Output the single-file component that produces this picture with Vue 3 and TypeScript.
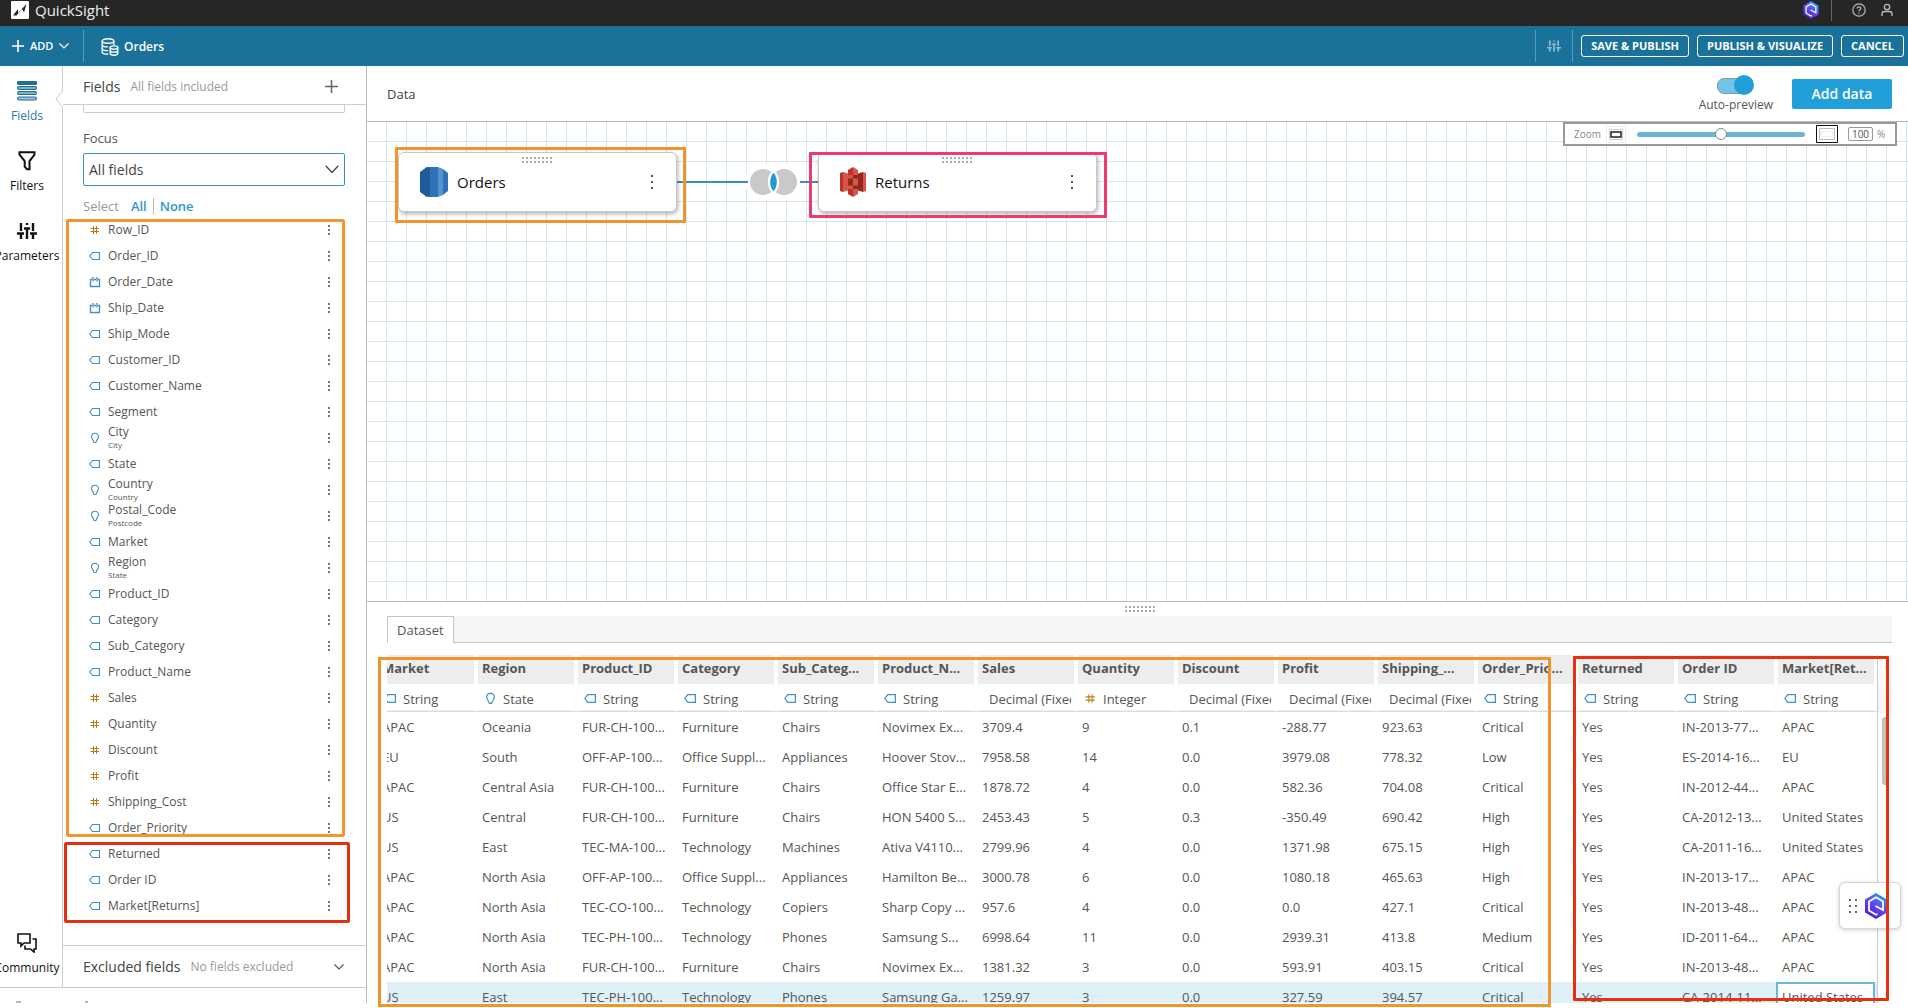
<script setup lang="ts">
import { ref } from 'vue'

type Kind = 'num' | 'tag' | 'date' | 'geo' | 'none'
interface Field { name: string; kind: Kind; geo?: string }
interface Column { name: string; kind: Kind; type: string }

const f = (name: string, kind: Kind, geo?: string): Field => ({ name, kind, geo })

const orderFields: Field[] = [
  f('Row_ID', 'num'), f('Order_ID', 'tag'), f('Order_Date', 'date'), f('Ship_Date', 'date'),
  f('Ship_Mode', 'tag'), f('Customer_ID', 'tag'), f('Customer_Name', 'tag'), f('Segment', 'tag'),
  f('City', 'geo', 'City'), f('State', 'tag'), f('Country', 'geo', 'Country'),
  f('Postal_Code', 'geo', 'Postcode'), f('Market', 'tag'), f('Region', 'geo', 'State'),
  f('Product_ID', 'tag'), f('Category', 'tag'), f('Sub_Category', 'tag'), f('Product_Name', 'tag'),
  f('Sales', 'num'), f('Quantity', 'num'), f('Discount', 'num'), f('Profit', 'num'),
  f('Shipping_Cost', 'num'), f('Order_Priority', 'tag'),
]
const returnFields: Field[] = [f('Returned', 'tag'), f('Order ID', 'tag'), f('Market[Returns]', 'tag')]
const groups = [
  { id: 'orders', fields: orderFields },
  { id: 'returns', fields: returnFields },
]

const c = (name: string, kind: Kind, type: string): Column => ({ name, kind, type })
const columns: Column[] = [
  c('Market', 'tag', 'String'), c('Region', 'geo', 'State'), c('Product_ID', 'tag', 'String'),
  c('Category', 'tag', 'String'), c('Sub_Categ...', 'tag', 'String'), c('Product_N...', 'tag', 'String'),
  c('Sales', 'none', 'Decimal (Fixed)'), c('Quantity', 'num', 'Integer'), c('Discount', 'none', 'Decimal (Fixed)'),
  c('Profit', 'none', 'Decimal (Fixed)'), c('Shipping_...', 'none', 'Decimal (Fixed)'),
  c('Order_Prio...', 'tag', 'String'), c('Returned', 'tag', 'String'), c('Order ID', 'tag', 'String'),
  c('Market[Ret...', 'tag', 'String'),
]

const rows: string[][] = [
  ['APAC', 'Oceania', 'FUR-CH-100...', 'Furniture', 'Chairs', 'Novimex Ex...', '3709.4', '9', '0.1', '-288.77', '923.63', 'Critical', 'Yes', 'IN-2013-77...', 'APAC'],
  ['EU', 'South', 'OFF-AP-100...', 'Office Suppl...', 'Appliances', 'Hoover Stov...', '7958.58', '14', '0.0', '3979.08', '778.32', 'Low', 'Yes', 'ES-2014-16...', 'EU'],
  ['APAC', 'Central Asia', 'FUR-CH-100...', 'Furniture', 'Chairs', 'Office Star E...', '1878.72', '4', '0.0', '582.36', '704.08', 'Critical', 'Yes', 'IN-2012-44...', 'APAC'],
  ['US', 'Central', 'FUR-CH-100...', 'Furniture', 'Chairs', 'HON 5400 S...', '2453.43', '5', '0.3', '-350.49', '690.42', 'High', 'Yes', 'CA-2012-13...', 'United States'],
  ['US', 'East', 'TEC-MA-100...', 'Technology', 'Machines', 'Ativa V4110...', '2799.96', '4', '0.0', '1371.98', '675.15', 'High', 'Yes', 'CA-2011-16...', 'United States'],
  ['APAC', 'North Asia', 'OFF-AP-100...', 'Office Suppl...', 'Appliances', 'Hamilton Be...', '3000.78', '6', '0.0', '1080.18', '465.63', 'High', 'Yes', 'IN-2013-17...', 'APAC'],
  ['APAC', 'North Asia', 'TEC-CO-100...', 'Technology', 'Copiers', 'Sharp Copy ...', '957.6', '4', '0.0', '0.0', '427.1', 'Critical', 'Yes', 'IN-2013-48...', 'APAC'],
  ['APAC', 'North Asia', 'TEC-PH-100...', 'Technology', 'Phones', 'Samsung S...', '6998.64', '11', '0.0', '2939.31', '413.8', 'Medium', 'Yes', 'ID-2011-64...', 'APAC'],
  ['APAC', 'North Asia', 'FUR-CH-100...', 'Furniture', 'Chairs', 'Novimex Ex...', '1381.32', '3', '0.0', '593.91', '403.15', 'Critical', 'Yes', 'IN-2013-48...', 'APAC'],
  ['US', 'East', 'TEC-PH-100...', 'Technology', 'Phones', 'Samsung Ga...', '1259.97', '3', '0.0', '327.59', '394.57', 'Critical', 'Yes', 'CA-2014-11...', 'United States'],
]

const focus = ref('All fields')
const autoPreview = ref(true)
const zoom = ref('100')
const zoomLevel = ref(50)
</script>

<template>
  <div class="app">
    <svg class="defs" aria-hidden="true">
      <defs>
        <linearGradient id="q-grad" x1="0.2" y1="1" x2="0.8" y2="0">
          <stop offset="0" stop-color="#4a1fb8" />
          <stop offset="0.5" stop-color="#5f45f2" />
          <stop offset="1" stop-color="#1fa8f8" />
        </linearGradient>
        <symbol id="i-num" viewBox="0 0 12 12">
          <path d="M4.500 2v8M7.500 2v8M1.500 4.500h8.500M1.500 7.500h8.500" fill="none" stroke="#c07a1a" stroke-width="1" />
        </symbol>
        <symbol id="i-tag" viewBox="0 0 12 12">
          <path d="M3.500 2.500h7v7h-7L.8 6z" fill="none" stroke="#3f8fc2" stroke-width="1.100" />
        </symbol>
        <symbol id="i-date" viewBox="0 0 12 12">
          <path d="M3 3.500H1.500v7h9v-7H9M5 3.500h2M4 1v4.500M8 1v4.500" fill="none" stroke="#3f8fc2" stroke-width="1.300" />
        </symbol>
        <symbol id="i-geo" viewBox="0 0 12 12">
          <path d="M6 1.200c-2.200 0-3.500 1.600-3.500 3.600 0 1.900 1.900 3 2.500 5.700h2c.6-2.700 2.500-3.800 2.500-5.700 0-2-1.300-3.600-3.500-3.600z" fill="none" stroke="#3f8fc2" stroke-width="1.100" />
        </symbol>
        <symbol id="i-dots" viewBox="0 0 4 12">
          <path d="M1 1h2v2H1zM1 5h2v2H1zM1 9h2v2H1z" fill="#777" />
        </symbol>
        <symbol id="i-grip" viewBox="0 0 30 6">
          <path d="M0 1h30M0 5h30" stroke="#aaa" stroke-width="2" stroke-dasharray="2 2" />
        </symbol>
        <symbol id="i-sliders" viewBox="0 0 20 16">
          <path d="M4 0v8M4 11v5M10 0v2M10 6v10M16 0v8M16 11v5M0 10.500h7M7 5.500h6M13 10.500h7" fill="none" stroke="currentColor" stroke-width="2.400" />
        </symbol>
        <symbol id="i-q" viewBox="0 0 22 26">
          <path d="M11 0l11 6.500v13L11 26 0 19.500v-13z" fill="url(#q-grad)" />
          <path d="M12.500 21l-1.500.8-7-4.200V8.500l7-4.300 7 4.300v8.500L10.500 13" fill="none" stroke="#fff" stroke-width="1.800" />
        </symbol>
      </defs>
    </svg>

    <header class="topbar">
      <a class="brand" href="#">
        <svg width="18" height="18" viewBox="0 0 18 18">
          <rect width="18" height="18" rx="1" fill="#fff" />
          <path d="M2 14.500l5-6.500v4l8.500-9-2.500 8.500-2-3.500-5.500 6.500z" fill="#262626" />
        </svg>
        <span>QuickSight</span>
      </a>
      <div class="top-tools">
        <svg width="18" height="18"><use href="#i-q" /></svg>
        <i class="top-rule"></i>
        <svg class="help" width="14" height="14" viewBox="0 0 14 14" fill="none" stroke="#bbb" stroke-width="1.200">
          <circle cx="7" cy="7" r="6.200" />
          <path d="M5.200 5.600c0-2.400 3.800-2.200 3.600 0C8.700 6.800 7 6.800 7 8.300M7 9.600v1.200" />
        </svg>
        <svg width="12" height="14" viewBox="0 0 12 14" fill="none" stroke="#bbb" stroke-width="1.300">
          <circle cx="6" cy="4" r="2.700" />
          <path d="M1 13v-2c0-1.500 1-2.500 2.500-2.500h5c1.500 0 2.500 1 2.500 2.500v2" />
        </svg>
      </div>
    </header>

    <nav class="bluebar">
      <button class="add">
        <svg width="12" height="12" viewBox="0 0 12 12"><path d="M6 0v12M0 6h12" stroke="#fff" stroke-width="1.600" /></svg>
        <span>ADD</span>
        <svg width="10" height="6" viewBox="0 0 10 6"><path d="M.5.500L5 5 9.500.5" fill="none" stroke="#fff" stroke-width="1.200" /></svg>
      </button>
      <div class="doc">
        <svg width="18" height="18" viewBox="0 0 18 18" fill="none" stroke="#fff" stroke-width="1.400">
          <ellipse cx="7" cy="3" rx="5.800" ry="2.200" />
          <path d="M1.200 3v11c0 1.200 2.500 2.200 6 2.200M12.800 3v4M1.200 6.700c0 1.200 2.600 2.200 5.800 2.200M1.200 10.400c0 1.200 2.600 2.200 6 2.200" />
          <ellipse cx="13" cy="9.500" rx="3.800" ry="1.600" />
          <path d="M9.200 9.500v6c0 1 1.700 1.700 3.800 1.700s3.800-.7 3.800-1.700v-6M9.200 12.500c0 1 1.700 1.600 3.800 1.600s3.800-.6 3.800-1.600" />
        </svg>
        <span>Orders</span>
      </div>
      <div class="actions">
        <button class="tune" aria-label="Settings"><svg width="14" height="12"><use href="#i-sliders" /></svg></button>
        <button class="outline">SAVE &amp; PUBLISH</button>
        <button class="outline">PUBLISH &amp; VISUALIZE</button>
        <button class="outline">CANCEL</button>
      </div>
    </nav>

    <div class="body">
      <div class="left">
        <div class="left-main">
          <aside class="rail">
            <button class="rail-item active">
              <svg width="20" height="20" viewBox="0 0 20 20">
                <rect width="20" height="4" rx="1" fill="#216f97" />
                <rect x=".6" y="5.600" width="18.800" height="2.800" rx="1.400" fill="#9fc6da" stroke="#216f97" stroke-width="1.200" />
                <rect x=".6" y="10.600" width="18.800" height="2.800" rx="1.400" fill="#9fc6da" stroke="#216f97" stroke-width="1.200" />
                <rect x=".6" y="16" width="18.800" height="3" rx="1.400" fill="#9fc6da" stroke="#216f97" stroke-width="1.200" />
              </svg>
              <span>Fields</span>
            </button>
            <button class="rail-item">
              <svg width="20" height="20" viewBox="0 0 20 20"><path d="M2.500 1.200h15v2.500l-5 6.500v8H10l-2.300-2.500v-5.500l-5.200-6.500z" fill="none" stroke="#111" stroke-width="2" /></svg>
              <span>Filters</span>
            </button>
            <button class="rail-item">
              <svg width="20" height="20" viewBox="0 -2 20 20"><use href="#i-sliders" width="20" height="16" /></svg>
              <span>Parameters</span>
            </button>
            <button class="rail-item last">
              <svg width="20" height="20" viewBox="0 0 20 20" fill="none" stroke="#111" stroke-width="1.600">
                <path d="M1 1h12v9H7l-3 3v-3H1z" />
                <path d="M15.500 6H19v10h-2v3l-3.500-3H8v-3.500" />
              </svg>
              <span>Community</span>
            </button>
            <svg class="notch" width="8" height="18" viewBox="0 0 8 18"><path d="M8 0L1 9l7 9" fill="#fff" stroke="#ccc" /></svg>
          </aside>

          <section class="fields">
            <div class="fields-head">
              <h2>Fields</h2>
              <span class="hint">All fields included</span>
              <button class="icon-btn" aria-label="Add field">
                <svg width="13" height="13" viewBox="0 0 13 13"><path d="M6.500 0v13M0 6.500h13" stroke="#666" stroke-width="1.500" /></svg>
              </button>
            </div>
            <div class="fields-top">
              <div class="search-edge"></div>
              <label class="focus-label" for="focus">Focus</label>
              <div class="select-wrap">
                <select id="focus" v-model="focus"><option>All fields</option></select>
                <svg width="14" height="9" viewBox="0 0 14 9"><path d="M.7.700L7 7.500 13.300.7" fill="none" stroke="#444" stroke-width="1.300" /></svg>
              </div>
              <div class="pick">
                <span>Select</span><a href="#">All</a><i></i><a href="#">None</a>
              </div>
            </div>
            <ul v-for="g in groups" :key="g.id" class="group" :class="g.id">
              <li v-for="x in g.fields" :key="x.name">
                <svg class="kind" width="12" height="12"><use :href="'#i-' + x.kind" /></svg>
                <span class="names"><span>{{ x.name }}</span><small v-if="x.geo">{{ x.geo }}</small></span>
                <svg class="more" width="4" height="12"><use href="#i-dots" /></svg>
              </li>
            </ul>
            <div class="excluded">
              <h2>Excluded fields</h2>
              <span class="hint">No fields excluded</span>
              <svg width="10" height="6" viewBox="0 0 10 6"><path d="M.5.500L5 5 9.500.5" fill="none" stroke="#555" stroke-width="1.200" /></svg>
            </div>
          </section>
        </div>
        <div class="foot">
          <svg width="72" height="2" viewBox="0 0 72 2"><path d="M0 1h5M69 1h3" stroke="#777" /></svg>
        </div>
      </div>

      <main class="main">
        <div class="data-head">
          <h2>Data</h2>
          <label class="preview">
            <input v-model="autoPreview" type="checkbox" role="switch" />
            <span>Auto-preview</span>
          </label>
          <button class="primary">Add data</button>
        </div>

        <div class="canvas">
          <svg class="link" width="142" height="40" viewBox="0 0 142 40">
            <circle cx="86" cy="20" r="18" fill="#fff" />
            <circle cx="107" cy="20" r="18" fill="#fff" />
            <path d="M0 20h71M123 20h19" stroke="#3b8fb8" stroke-width="2" />
            <circle cx="86" cy="20" r="13" fill="#c9c9c9" />
            <circle cx="107" cy="20" r="13" fill="#c9c9c9" />
            <path d="M96.500 9c6 6 6 16 0 22-6-6-6-16 0-22z" fill="#1e9bd7" stroke="#fff" stroke-width="2.400" />
          </svg>
          <article class="node node-orders">
            <svg class="grip" width="30" height="6"><use href="#i-grip" /></svg>
            <svg width="28" height="30" viewBox="0 0 28 30">
              <path d="M0 5l7-5v30l-7-5z" fill="#205b99" />
              <path d="M5 1l5-1h8v30h-8l-5-1z" fill="#2e73b8" />
              <path d="M5 1l5-1v30l-5-1z" fill="#205b99" />
              <path d="M18 0l5 2v26l-5 2z" fill="#5294cf" />
              <path d="M23 2l5 4v18l-5 4z" fill="#2e73b8" />
            </svg>
            <span>Orders</span>
            <svg class="menu" width="4" height="14" viewBox="0 0 4 14"><path d="M1 0h2v2H1zM1 6h2v2H1zM1 12h2v2H1z" fill="#555" /></svg>
          </article>
          <article class="node node-returns">
            <svg class="grip" width="30" height="6"><use href="#i-grip" /></svg>
            <svg width="26" height="30" viewBox="0 0 26 30">
              <path d="M0 6l3-1v20l-3-1z" fill="#b8352c" />
              <path d="M3 5l10 3v14L3 25z" fill="#dd5347" />
              <path d="M23 5L13 8v14l10 3z" fill="#8f2a20" />
              <path d="M23 5l3 1v18l-3 1z" fill="#dd5347" />
              <path d="M8 3l5-3v8H8zM8 27l5 3v-8H8z" fill="#b8352c" />
              <path d="M18 3l-5-3v8h5zM18 27l-5 3v-8h5z" fill="#dd5347" />
              <path d="M8 11.500h5v7H8z" fill="#8f2a20" />
              <path d="M13 11.500h5v7h-5z" fill="#dd5347" />
            </svg>
            <span>Returns</span>
            <svg class="menu" width="4" height="14" viewBox="0 0 4 14"><path d="M1 0h2v2H1zM1 6h2v2H1zM1 12h2v2H1z" fill="#555" /></svg>
          </article>

          <div class="zoombar">
            <label for="zoom-range">Zoom</label>
            <svg width="20" height="17" viewBox="0 0 20 17" fill="none">
              <path d="M.5.500h19v16H.5z" stroke="#eee" />
              <path d="M3.500 3.500h13v10h-13z" stroke="#ccc" />
              <path d="M5 6h10v5H5z" stroke="#222" stroke-width="1.500" />
            </svg>
            <input id="zoom-range" v-model="zoomLevel" type="range" min="0" max="100" />
            <svg width="22" height="18" viewBox="0 0 22 18" fill="none">
              <path d="M.5.500h21v17H.5z" stroke="#111" />
              <path d="M3.500 3.500h15v11h-15z" stroke="#bbb" />
              <path d="M5.500 6.500h11v5h-11z" stroke="#eee" />
            </svg>
            <input v-model="zoom" class="pct" type="text" aria-label="Zoom percent" />
            <span>%</span>
          </div>
        </div>

        <section class="data">
          <div class="resize"><svg width="30" height="6"><use href="#i-grip" /></svg></div>
          <div class="tabs"><button>Dataset</button></div>
          <div class="sheet">
            <div class="clip">
              <table>
                <thead>
                  <tr class="names-row">
                    <th v-for="col in columns" :key="col.name"><div>{{ col.name }}</div></th>
                  </tr>
                  <tr class="types-row">
                    <td v-for="col in columns" :key="col.name">
                      <div :class="{ bare: col.kind === 'none' }">
                        <svg v-if="col.kind !== 'none'" width="13" height="13"><use :href="'#i-' + col.kind" /></svg>
                        <span>{{ col.type }}</span>
                      </div>
                    </td>
                  </tr>
                </thead>
                <tbody>
                  <tr v-for="(r, i) in rows" :key="i" :class="{ hit: i === rows.length - 1 }">
                    <td v-for="(v, j) in r" :key="j"><div>{{ v }}</div></td>
                  </tr>
                </tbody>
              </table>
            </div>
            <div class="gutter"><i></i></div>
            <div class="mark mark-orders"></div>
            <div class="mark mark-returns"></div>
          </div>
        </section>
        <button class="assistant" aria-label="Assistant">
          <svg width="8" height="14" viewBox="0 0 8 14"><path d="M0 0h2v2H0zM6 0h2v2H6zM0 6h2v2H0zM6 6h2v2H6zM0 12h2v2H0zM6 12h2v2H6z" fill="#666" /></svg>
          <svg width="22" height="26"><use href="#i-q" /></svg>
        </button>
      </main>
    </div>
  </div>
</template>

<style>
body { background: #fff; }
</style>

<style scoped>
.app {
  display: flex;
  flex-direction: column;
  height: 100vh;
  overflow: hidden;
  font-family: "Open Sans", "Noto Sans", sans-serif;
  font-size: 12px;
  line-height: 16px;
  color: #555;
}
.app * { box-sizing: border-box; }
svg { display: block; flex: none; }
.defs { position: absolute; width: 0; height: 0; }
button { font: inherit; color: inherit; background: none; border: 0; padding: 0; }
a { text-decoration: none; color: #2f97cf; }
h2 { margin: 0; font-size: 13px; font-weight: 500; color: #444; }
ul { margin: 0; padding: 0; list-style: none; }

.topbar { display: flex; justify-content: space-between; height: 26px; flex: none; background: #262626; }
.brand { display: flex; gap: 6px; padding: 1px 0 0 11px; color: #eee; font-size: 15px; line-height: 18px; }
.top-tools { display: flex; align-items: center; padding: 0 15px 6px 0; }
.top-rule { width: 1px; height: 22px; margin: 0 20px 0 11px; background: #666; }
.help { margin-right: 15px; }

.bluebar { display: flex; align-items: center; height: 40px; flex: none; background: #1a7199; color: #fff; font-weight: 600; }
.add { display: flex; align-items: center; gap: 6px; height: 32px; width: 84px; padding-left: 12px; border-right: 1px solid #5c9bb8; font-size: 11px; }
.doc { display: flex; align-items: center; gap: 5px; padding: 2px 0 0 17px; }
.actions { display: flex; align-items: center; gap: 8px; margin-left: auto; padding-right: 4px; }
.tune { display: flex; align-items: center; justify-content: center; width: 38px; height: 32px; color: #8fbdd2; border: solid #5c9bb8; border-width: 0 1px; }
.outline { height: 22px; padding: 0 9px; border: 1px solid #fff; border-radius: 3px; font-size: 11px; font-weight: 700; line-height: 20px; white-space: nowrap; }

.body { display: flex; flex: 1; min-height: 0; padding-bottom: 5px; }
.left { display: flex; flex-direction: column; width: 367px; flex: none; border-right: 1px solid #bbb; }
.left-main { display: flex; flex: 1; min-height: 0; border-bottom: 1px solid #ccc; }
.foot { display: flex; align-items: flex-end; height: 15px; padding-left: 16px; }

.rail { position: relative; display: flex; flex-direction: column; gap: 20px; width: 63px; flex: none; padding: 15px 8px 10px 0; border-right: 1px solid #ccc; }
.rail-item { display: flex; flex-direction: column; align-items: center; gap: 7px; height: 50px; color: #111; font-weight: 500; white-space: nowrap; }
.rail-item svg { color: #111; }
.rail-item span { margin: 0 -10px; }
.rail-item.active { color: #2a79a5; }
.rail-item.last { margin-top: auto; height: 44px; }
.notch { position: absolute; right: -1px; top: 24px; }

.fields { display: flex; flex-direction: column; flex: 1; min-width: 0; }
.fields h2 { font-size: 14px; }
.fields-head { display: flex; align-items: center; height: 39px; flex: none; padding: 3px 28px 0 20px; border-bottom: 1px solid #ccc; }
.hint { margin-left: 10px; color: #999; }
.icon-btn { margin-left: auto; }
.fields-top { display: flex; flex-direction: column; padding: 0 21px 0 20px; height: 112px; flex: none; }
.search-edge { height: 8px; border: 1px solid #ccc; border-top: 0; border-radius: 0 0 2px 2px; }
.focus-label { margin: 17px 0 7px; font-size: 13px; }
.select-wrap { position: relative; height: 33px; }
.select-wrap select { width: 100%; height: 100%; appearance: none; border: 1px solid #3692bd; border-radius: 2px; background: #fff; padding: 0 5px; font: inherit; font-size: 14px; color: #444; }
.select-wrap svg { position: absolute; right: 6px; top: 12px; pointer-events: none; }
.pick { display: flex; align-items: center; margin-top: 12px; font-size: 13px; color: #999; }
.pick a { margin: 0 6px 0 12px; font-weight: 600; }
.pick i { width: 1px; height: 16px; background: #bbb; }
.pick i + a { margin-left: 6px; }

.group { position: relative; flex: none; }
.group::after { content: ""; position: absolute; border: 3px solid #f7942a; border-radius: 2px; pointer-events: none; }
.group.orders::after { left: 3px; right: 21px; top: 2px; bottom: 4px; }
.group.returns::after { left: 1px; right: 16px; top: 1px; bottom: -4px; border-color: #e2310f; }
.group li { display: flex; align-items: center; height: 26px; padding: 0 35px 0 26px; }
.kind { margin-right: 7px; }
.names { display: flex; flex-direction: column; }
.names small { margin: -1px 0 1px; font-size: 8px; line-height: 12px; }
.more { margin-left: auto; }
.excluded { display: flex; align-items: center; height: 42px; flex: none; margin-top: auto; padding: 1px 22px 0 20px; border-top: 1px solid #ccc; }
.excluded svg { margin-left: auto; }

.main { position: relative; display: flex; flex-direction: column; flex: 1; min-width: 0; }
.data-head { display: flex; align-items: center; height: 56px; flex: none; padding: 0 16px 0 20px; border-bottom: 1px solid #bbb; }
.preview { display: flex; flex-direction: column; align-items: center; gap: 2px; margin: 0 19px 0 auto; }
.preview input { position: relative; appearance: none; width: 37px; height: 20px; margin: 0; }
.preview input::before { content: ""; position: absolute; left: 0; top: 3px; width: 30px; height: 14px; border-radius: 7px; background: #74c3ea; border: 1px solid #8a9aa3; }
.preview input::after { content: ""; position: absolute; right: 0; top: 0; width: 20px; height: 20px; border-radius: 50%; background: #229fd9; }
.primary { width: 100px; height: 30px; background: #229fd9; border-radius: 2px; color: #fff; font-size: 14px; font-weight: 600; }

.canvas {
  position: relative;
  flex: 1;
  min-height: 0;
  background-image:
    linear-gradient(to right, transparent 19px, #d3e6ee 19px),
    linear-gradient(to bottom, transparent 19px, #d3e6ee 19px);
  background-size: 20px 20px;
}
.link { position: absolute; left: 310px; top: 40px; }
.node { position: absolute; top: 30px; display: flex; align-items: center; width: 279px; height: 60px; padding: 0 22px 0 21px; background: #fff; border: 1px solid #c4c8ca; border-radius: 6px; box-shadow: 1px 2px 4px rgba(0, 0, 0, .3); color: #111; font-size: 15px; }
.node::after { content: ""; position: absolute; border: 3px solid #f0952b; border-radius: 1px; }
.node .grip { position: absolute; left: 123px; top: 4px; }
.node > span { margin-left: 9px; }
.node .menu { margin-left: auto; }
.node-orders { left: 31px; }
.node-orders::after { left: -4px; right: -10px; top: -6px; bottom: -12px; }
.node-returns { left: 451px; }
.node-returns::after { left: -10px; right: -11px; top: -1px; bottom: -7px; border-color: #ef3a6e; }

.zoombar { position: absolute; right: 11px; top: 0; display: flex; align-items: center; width: 334px; height: 24px; padding: 0 8px 0 9px; border: 2px solid #999; background: #fff; font-size: 10px; color: #888; }
.zoombar label { width: 32px; }
.zoombar input[type="range"] { appearance: none; width: 168px; height: 5px; margin: 0 11px; border-radius: 3px; background: #6cb4d6; }
.zoombar input[type="range"]::-webkit-slider-thumb { appearance: none; width: 12px; height: 12px; border: 1px solid #888; border-radius: 50%; background: #fff; }
.zoombar .pct { width: 25px; height: 14px; margin: 0 4px 0 10px; padding: 0; border: 1px solid #999; border-radius: 2px; font: inherit; text-align: center; color: #555; }

.data { height: 402px; flex: none; border-top: 1px solid #bbb; padding: 0 16px 0 20px; display: flex; flex-direction: column; }
.resize { display: flex; justify-content: center; height: 14px; flex: none; padding-top: 4px; }
.tabs { height: 27px; flex: none; background: #f5f5f5; border-bottom: 1px solid #c4c4c4; }
.tabs button { height: 27px; padding: 0 9px; border: 1px solid #c4c4c4; border-bottom: 0; background: #fff; font-size: 13px; }
.sheet { position: relative; display: flex; flex: 1; min-height: 0; margin-top: 12px; }
.clip { flex: 1; min-width: 0; overflow: hidden; }
table { width: 1500px; margin-left: -9px; table-layout: fixed; border-collapse: collapse; font-size: 13px; }
th, td { padding: 0; text-align: left; white-space: nowrap; }
th > div { height: 29px; margin-right: 4px; padding-left: 4px; background: #ededed; line-height: 27px; font-weight: 700; }
.types-row td > div { display: flex; align-items: center; height: 27px; gap: 6px; margin-right: 4px; padding: 3px 0 0 6px; border-bottom: 1px solid #eee; }
.types-row td > div.bare { padding: 3px 3px 0 11px; }
.bare span { min-width: 0; overflow: hidden; }
.types-row { border-bottom: 1px solid #ddd; }
tbody td { height: 30px; }
tbody td > div { padding-left: 4px; height: 30px; line-height: 30px; overflow: hidden; }
.hit { background: #e0f0f9; }
.hit td:last-child > div { margin: 0 3px 0 -2px; border: 2px solid #6cb8da; line-height: 26px; background: #fff; }
.gutter { width: 15px; flex: none; border-left: 1px solid #ccc; }
.gutter::before { content: ""; display: block; height: 58px; background: linear-gradient(#fff, #f2f2f2); }
.gutter i { display: block; width: 6px; height: 68px; margin: 4px 0 0 4px; border-radius: 3px; background: #c1c1c1; }
.mark { position: absolute; border: 3px solid #f0952b; border-radius: 1px; pointer-events: none; z-index: 3; }
.mark-orders { left: -9px; right: 341px; top: 2px; bottom: -4px; }
.mark-returns { left: 1186px; right: 3px; top: 1px; bottom: 2px; border-color: #e8300f; }

.assistant { position: absolute; right: 7px; bottom: 74px; z-index: 2; display: flex; align-items: center; gap: 8px; width: 62px; height: 47px; padding-left: 9px; background: #fff; border: 1px solid #d0d8de; border-radius: 6px; box-shadow: 0 1px 4px rgba(0, 0, 0, .2); }
</style>
